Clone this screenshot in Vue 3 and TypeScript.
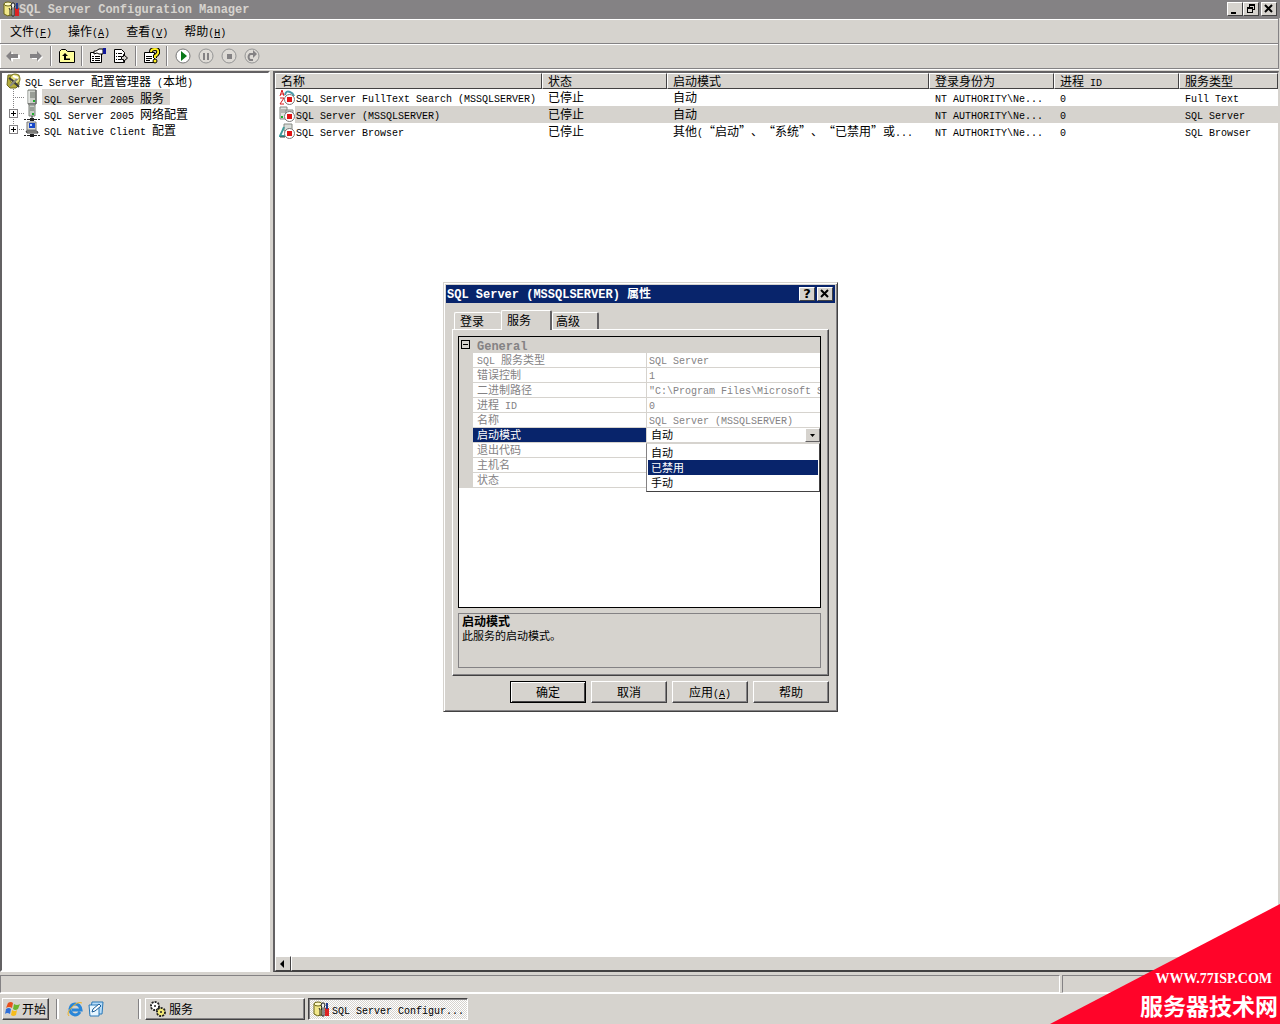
<script setup lang="ts">
import { ref, h, type FunctionalComponent } from 'vue'

// Latin runs are set in a half-width face beside full-width Chinese characters.
const T: FunctionalComponent<{ s: string }> = (props) =>
  h(
    'span',
    { class: 'mix' },
    props.s
      .split(/([\x20-\x7e]+)/)
      .filter(Boolean)
      .map((part) => (/^[\x20-\x7e]/.test(part) ? h('span', { class: 'latin' }, part) : part)),
  )
T.props = ['s']

interface Service {
  icon: string
  name: string
  state: string
  mode: string
  logon: string
  pid: string
  type: string
}

const menus = [
  { label: '文件', key: 'F' },
  { label: '操作', key: 'A' },
  { label: '查看', key: 'V' },
  { label: '帮助', key: 'H' },
]

const tools = [
  { id: 'back', label: '后退' },
  { id: 'forward', label: '前进' },
  { id: '' },
  { id: 'folder', label: '向上' },
  { id: '' },
  { id: 'props', label: '属性' },
  { id: 'export', label: '导出列表' },
  { id: '' },
  { id: 'help', label: '帮助' },
  { id: '' },
  { id: 'play', label: '启动' },
  { id: 'pause', label: '暂停' },
  { id: 'stop', label: '停止' },
  { id: 'restart', label: '重新启动' },
]

const nodes = [
  { icon: 'server', label: 'SQL Server 2005 服务', leaf: true },
  { icon: 'network', label: 'SQL Server 2005 网络配置', leaf: false },
  { icon: 'client', label: 'SQL Native Client 配置', leaf: false },
]
const activeNode = ref(0)

const columns = ['名称', '状态', '启动模式', '登录身份为', '进程 ID', '服务类型']
const services: Service[] = [
  { icon: 'svc-text', name: 'SQL Server FullText Search (MSSQLSERVER)', state: '已停止', mode: '自动', logon: 'NT AUTHORITY\\Ne...', pid: '0', type: 'Full Text' },
  { icon: 'svc-db', name: 'SQL Server (MSSQLSERVER)', state: '已停止', mode: '自动', logon: 'NT AUTHORITY\\Ne...', pid: '0', type: 'SQL Server' },
  { icon: 'svc-browser', name: 'SQL Server Browser', state: '已停止', mode: '其他(“启动”、“系统”、“已禁用”或...', logon: 'NT AUTHORITY\\Ne...', pid: '0', type: 'SQL Browser' },
]
const activeService = ref(1)

const tabs = ['登录', '服务', '高级']
const activeTab = ref(1)

const properties = [
  { name: 'SQL 服务类型', value: 'SQL Server' },
  { name: '错误控制', value: '1' },
  { name: '二进制路径', value: '"C:\\Program Files\\Microsoft S' },
  { name: '进程 ID', value: '0' },
  { name: '名称', value: 'SQL Server (MSSQLSERVER)' },
  { name: '启动模式', value: '自动', editing: true },
  { name: '退出代码', value: '' },
  { name: '主机名', value: '' },
  { name: '状态', value: '' },
]
const modes = ['自动', '已禁用', '手动']
const mode = ref('自动')
const hovered = ref(1)
</script>

<template>
  <div class="desktop">
    <svg class="defs" aria-hidden="true">
      <symbol id="sqlcfg" viewBox="0 0 16 16">
        <path d="M1 3v10q3 3 8 1V3z" fill="#f2e88a" stroke="#6b6412" />
        <ellipse cx="5" cy="3" rx="4" ry="2" fill="#fffbc8" stroke="#6b6412" />
        <path d="M6 7l1 2v5M9 7L8 9" stroke="#222" fill="none" />
        <path d="M9 2h2l1 2-1 3v8H9V7L8 4z" fill="#eee" stroke="#222" />
        <path d="M12 7h4v8h-4z" fill="#d22" />
        <path d="M14 2v6" stroke="#223a8c" stroke-width="2" />
      </symbol>
      <symbol id="root" viewBox="0 0 16 16">
        <path d="M2 2h11v10l-3 3H4l-3-3z" fill="#b5ad3a" stroke="#6e6a20" />
        <circle cx="9" cy="6" r="5" fill="#e6e07a" stroke="#77721f" />
        <path d="M3 5l3 2 7 7" stroke="#3c3c3c" stroke-width="2" fill="none" />
        <path d="M12 5l-8 8" stroke="#8a8a80" stroke-width="2" />
        <path d="M7 3l5 2" stroke="#fff" stroke-width="2" />
      </symbol>
      <symbol id="server" viewBox="0 0 16 16">
        <path d="M4 1h8v14H4z" fill="#c9cdc6" stroke="#7c817a" />
        <path d="M5 2v12" stroke="#fff" />
        <path d="M6 4h5M6 6h5M6 8h5" stroke="#6a7068" />
        <path d="M9 11h2v2H9z" fill="#1fae2c" />
        <path d="M12 1v14H4" stroke="#555" fill="none" />
      </symbol>
      <symbol id="network" viewBox="0 0 16 16">
        <path d="M5 0h6v11H5z" fill="#c9cdc6" stroke="#7c817a" />
        <path d="M6 3h4M6 5h4" stroke="#6a7068" />
        <path d="M8 8h2v2H8z" fill="#1fae2c" />
        <path d="M8 11v3M0 14.500h2M3 14.500h10M14 14.500h2" stroke="#222" />
        <path d="M6 13h4v3H6z" fill="#222" />
      </symbol>
      <symbol id="client" viewBox="0 0 16 16">
        <path d="M3 1h9v8H3z" fill="#dcdcd4" stroke="#777" />
        <path d="M5 2h6v5H5z" fill="#1747c8" />
        <path d="M6 3h2v2H6z" fill="#bcd4ff" />
        <path d="M2 10h11l1 2H3z" fill="#c8c8c0" stroke="#333" />
        <path d="M0 14.500h2M3 14.500h10M14 14.500h2" stroke="#222" />
        <path d="M6 13h4v3H6z" fill="#222" />
      </symbol>
      <symbol id="svc-stop" viewBox="0 0 16 16">
        <circle cx="10.500" cy="10.500" r="5" fill="#fff" stroke="#777" />
        <path d="M8 8h5v5H8z" fill="#e01414" />
      </symbol>
      <symbol id="svc-text" viewBox="0 0 16 16">
        <path d="M1 7l2-6 2 6M2 5h3M1 9h4l-4 6h4" stroke="#d81c1c" fill="none" />
        <path d="M6 6q1-5 5-3 3 1 4 4" stroke="#4a9aa8" stroke-width="2" fill="none" />
        <use href="#svc-stop" />
      </symbol>
      <symbol id="svc-db" viewBox="0 0 16 16">
        <path d="M1 1h7v12H1z" fill="#e2e4e0" stroke="#868a84" />
        <path d="M2 4h5M2 6h5" stroke="#868a84" />
        <path d="M2 10h2v2H2z" fill="#1fae2c" />
        <path d="M7 4h7v4H7z" fill="#d8dcd8" stroke="#868a84" />
        <use href="#svc-stop" />
      </symbol>
      <symbol id="svc-browser" viewBox="0 0 16 16">
        <path d="M5 1h8v7H5z" fill="#d8dcd8" stroke="#868a84" />
        <path d="M5 4q-2 5-4 9h5" stroke="#3d9c9c" stroke-width="2" fill="none" />
        <path d="M1 14h5" stroke="#444" />
        <use href="#svc-stop" />
      </symbol>
      <symbol id="back" viewBox="0 0 16 16">
        <path d="M3 9l5-5v3h7v4H8v3z" fill="#fff" />
        <path d="M1 8l5-5v3h7v4H6v3z" fill="#848284" />
      </symbol>
      <symbol id="forward" viewBox="0 0 16 16">
        <path d="M15 9l-5-5v3H4v4h6v3z" fill="#fff" />
        <path d="M14 8L9 3v3H2v4h7v3z" fill="#848284" />
      </symbol>
      <symbol id="folder" viewBox="0 0 16 16">
        <path d="M.5 14.500v-11l2-2h4l2 2h7v11z" fill="#ffff9c" stroke="#000" />
        <path d="M6 5L3 8h2v4h6v-1.500H7V8h2z" fill="#000" />
      </symbol>
      <symbol id="props" viewBox="0 0 16 16">
        <path d="M.5 4.500h11v10H.5z" fill="#fff" stroke="#000" />
        <path d="M2 8.500h2M5 8.500h5M2 10.500h2M5 10.500h5M2 12.500h2M5 12.500h5" stroke="#000" />
        <path d="M4 3h2l3-2h4v5H9L7 5 4 6z" fill="#fff" stroke="#000" />
        <path d="M13 0h3v6h-3z" fill="#10189c" />
      </symbol>
      <symbol id="export" viewBox="0 0 16 16">
        <path d="M1.500 1.500h7l3 3v10h-10z" fill="#fff" stroke="#000" />
        <path d="M3 5.500h1M5 5.500h4M3 8.500h1M5 8.500h3M3 11.500h1M5 11.500h3" stroke="#000" />
        <path d="M8.500 8.500h2v-2l4 3.500-4 3.500v-2h-2z" fill="#d6d3ce" stroke="#000" />
      </symbol>
      <symbol id="help" viewBox="0 0 16 16">
        <path d="M.5 4.500h10v10H.5z" fill="#fff" stroke="#000" />
        <path d="M2 8.500h6M2 10.500h6M2 12.500h4" stroke="#000" />
        <path d="M7 4q0-3 4-3t3 4q-1 2-3 3v2" stroke="#000" stroke-width="4" fill="none" />
        <path d="M7 4q0-3 4-3t3 4q-1 2-3 3v2" stroke="#ffee20" stroke-width="2" fill="none" />
        <circle cx="11" cy="13" r="2" fill="#ffee20" stroke="#000" />
      </symbol>
      <symbol id="play" viewBox="0 0 16 16">
        <circle cx="8" cy="8" r="7" fill="#fff" stroke="#777" />
        <path d="M6 3v10l6-5z" fill="#087818" />
      </symbol>
      <symbol id="pause" viewBox="0 0 16 16">
        <circle cx="8" cy="8" r="7" fill="#dedbd6" stroke="#949494" />
        <path d="M5 5h2v7H5zM9 5h2v7H9z" fill="#848284" />
      </symbol>
      <symbol id="stop" viewBox="0 0 16 16">
        <circle cx="8" cy="8" r="7" fill="#dedbd6" stroke="#949494" />
        <path d="M6 6h5v5H6z" fill="#848284" />
      </symbol>
      <symbol id="restart" viewBox="0 0 16 16">
        <circle cx="8" cy="8" r="7" fill="#dedbd6" stroke="#949494" />
        <path d="M9 12H6q-3-3 0-6h4" stroke="#848284" stroke-width="2" fill="none" />
        <path d="M9 2l4 4-4 4z" fill="#848284" />
      </symbol>
      <symbol id="flag" viewBox="0 0 16 16">
        <path d="M3 2q3-2 5 0L7 7Q4 5 1 7z" fill="#e8501c" />
        <path d="M9 3q3 2 6 0l-2 5q-3 2-5 0z" fill="#6cb52c" />
        <path d="M1 8q3-2 5 0l-1 5q-3-2-5 0z" fill="#2f6fd8" />
        <path d="M7 9q3 2 5 0l-1 5q-3 2-5 0z" fill="#f6bc1c" />
      </symbol>
      <symbol id="ie" viewBox="0 0 16 16">
        <path d="M13 11q-2 3-5 3-5-1-5-6 1-5 5-5 5 0 6 6H5" stroke="#2a86d8" stroke-width="3" fill="none" />
        <path d="M2 15Q-1 12 5 6q6-6 10-4" stroke="#f0b424" stroke-width="1" fill="none" />
      </symbol>
      <symbol id="desk" viewBox="0 0 16 16">
        <path d="M4 1h11l-1 12H2z" fill="#b8dcf8" stroke="#2878b8" />
        <path d="M1 4h10v11H2z" fill="#e8f6ff" stroke="#2878b8" />
        <path d="M4 11l1-3 6-5 2 2-6 5z" fill="#fff" stroke="#1c5c94" />
      </symbol>
      <symbol id="gears" viewBox="0 0 16 16">
        <circle cx="5" cy="5" r="4" fill="#fff" stroke="#222" stroke-width="2" stroke-dasharray="2 1" />
        <circle cx="5" cy="5" r="3" fill="#fff" />
        <circle cx="5" cy="5" r="1" fill="#222" />
        <circle cx="11" cy="11" r="4" fill="#f2e878" stroke="#222" stroke-width="2" stroke-dasharray="2 1" />
        <circle cx="11" cy="11" r="3" fill="#f2e878" />
        <circle cx="11" cy="11" r="1" fill="#222" />
      </symbol>
    </svg>

    <header class="titlebar">
      <svg class="icon"><use href="#sqlcfg" /></svg>
      <h1 class="bold"><T s="SQL Server Configuration Manager" /></h1>
      <div class="caption">
        <button class="cap" aria-label="最小化"><svg viewBox="0 0 10 10"><path d="M1 8h5v2H1z" /></svg></button>
        <button class="cap" aria-label="还原">
          <svg viewBox="0 0 10 10"><path d="M3 0h6v6H7V5h1V2H4v1H3zM1 3h6v6H1zM2 5v3h4V5z" fill-rule="evenodd" /></svg>
        </button>
        <button class="cap last" aria-label="关闭"><svg viewBox="0 0 10 10"><path d="M1 1l7 7M8 1L1 8" class="cross" /></svg></button>
      </div>
    </header>

    <nav class="menubar">
      <button v-for="m in menus" :key="m.key"><T :s="m.label + '('" /><u class="latin">{{ m.key }}</u><span class="latin">)</span></button>
    </nav>

    <div class="toolbar">
      <template v-for="(t, i) in tools" :key="i">
        <button v-if="t.id" :aria-label="t.label"><svg class="icon"><use :href="'#' + t.id" /></svg></button>
        <span v-else class="sep"></span>
      </template>
    </div>

    <main class="panes">
      <aside class="tree">
        <div class="root-node"><svg class="icon"><use href="#root" /></svg><T s="SQL Server 配置管理器 (本地)" /></div>
        <ul>
          <li v-for="(n, i) in nodes" :key="n.label">
            <span class="branch"><button v-if="!n.leaf" class="expander" aria-label="展开"></button></span>
            <svg class="icon"><use :href="'#' + n.icon" /></svg>
            <button class="node" :class="{ active: i === activeNode }" @click="activeNode = i"><T :s="n.label" /></button>
          </li>
        </ul>
      </aside>

      <section class="list">
        <table>
          <colgroup>
            <col class="c-name" /><col class="c-mid" /><col class="c-mode" /><col class="c-mid" /><col class="c-mid" /><col />
          </colgroup>
          <thead>
            <tr><th v-for="c in columns" :key="c" scope="col"><T :s="c" /></th></tr>
          </thead>
          <tbody>
            <tr v-for="(s, i) in services" :key="s.name" :class="{ active: i === activeService }" @click="activeService = i">
              <td class="name"><div><svg class="icon"><use :href="'#' + s.icon" /></svg><span class="fill"><T :s="s.name" /></span></div></td>
              <td><T :s="s.state" /></td>
              <td><T :s="s.mode" /></td>
              <td><T :s="s.logon" /></td>
              <td><T :s="s.pid" /></td>
              <td><T :s="s.type" /></td>
            </tr>
          </tbody>
        </table>
        <div class="scroll">
          <button aria-label="向左滚动"><svg viewBox="0 0 8 8"><path d="M5 0v8L1 4z" /></svg></button>
          <div class="thumb"></div>
        </div>
      </section>
    </main>

    <div class="status"><span></span><span class="side"></span></div>

    <footer class="taskbar">
      <button class="start"><svg class="icon"><use href="#flag" /></svg>开始</button>
      <span class="grip"></span>
      <div class="quick">
        <button aria-label="Internet Explorer"><svg class="icon"><use href="#ie" /></svg></button>
        <button aria-label="显示桌面"><svg class="icon"><use href="#desk" /></svg></button>
      </div>
      <span class="grip"></span>
      <button class="task"><svg class="icon"><use href="#gears" /></svg>服务</button>
      <button class="task pressed"><svg class="icon"><use href="#sqlcfg" /></svg><T s="SQL Server Configur..." /></button>
    </footer>

    <section class="dialog" role="dialog" aria-labelledby="dialog-title">
      <header>
        <h2 id="dialog-title" class="bold"><T s="SQL Server (MSSQLSERVER) 属性" /></h2>
        <div class="caption">
          <button class="cap" aria-label="帮助主题"><b>?</b></button>
          <button class="cap last" aria-label="关闭对话框"><svg viewBox="0 0 10 10"><path d="M1 1l7 7M8 1L1 8" class="cross" /></svg></button>
        </div>
      </header>
      <div class="tabs" role="tablist">
        <button v-for="(t, i) in tabs" :key="t" role="tab" :aria-selected="i === activeTab" @click="activeTab = i">{{ t }}</button>
      </div>
      <div class="page">
        <div class="grid">
          <div class="group bold"><button class="collapse" aria-label="折叠"></button><T s="General" /></div>
          <div v-for="p in properties" :key="p.name" class="prop" :class="{ editing: p.editing }">
            <component :is="p.editing ? 'label' : 'span'" class="key" :for="p.editing ? 'mode' : undefined"><T :s="p.name" /></component>
            <span v-if="!p.editing" class="value"><T :s="p.value" /></span>
            <span v-else class="value combo">
              <select id="mode" v-model="mode"><option v-for="m in modes" :key="m">{{ m }}</option></select>
              <span class="arrow"><svg viewBox="0 0 5 3"><path d="M0 0h5L2.500 3z" /></svg></span>
              <ul class="popup" role="listbox" aria-label="启动模式">
                <li v-for="(m, i) in modes" :key="m" role="option" :aria-selected="i === hovered" @mouseenter="hovered = i" @click="mode = m">{{ m }}</li>
              </ul>
            </span>
          </div>
        </div>
        <div class="hint"><strong>启动模式</strong><p>此服务的启动模式。</p></div>
      </div>
      <div class="actions">
        <button class="default">确定</button>
        <button>取消</button>
        <button><T s="应用(" /><u class="latin">A</u><span class="latin">)</span></button>
        <button>帮助</button>
      </div>
    </section>

    <a class="badge" href="#">
      <span class="site">WWW.77ISP.COM</span>
      <span class="brand">服务器技术网</span>
    </a>
  </div>
</template>

<style>
body {
  margin: 0;
  background: #d6d3ce;
}
.latin {
  font-family: 'Liberation Mono', monospace;
  font-size: 10px;
  line-height: 0;
  white-space: pre;
}
.bold .latin {
  font-size: 12px;
}
.mix {
  white-space: nowrap;
}
</style>

<style scoped>
.desktop {
  position: relative;
  display: flex;
  flex-direction: column;
  min-height: 100vh;
  overflow: hidden;
  background: #d6d3ce;
  color: #000;
  font: 12px/16px 'Noto Sans CJK SC', sans-serif;
  text-spacing-trim: space-all;
}
.desktop * {
  box-sizing: border-box;
}
.defs {
  position: absolute;
  width: 0;
  height: 0;
}
button {
  padding: 0;
  border: 0;
  background: none;
  color: inherit;
  font: inherit;
}
h1,
h2,
p,
ul {
  margin: 0;
  padding: 0;
  list-style: none;
}
h1,
h2 {
  padding-bottom: 2px;
  font-size: 12px;
  line-height: 14px;
}
.icon {
  width: 16px;
  height: 16px;
  flex: none;
  display: block;
}
.titlebar {
  display: flex;
  align-items: center;
  height: 18px;
  padding: 0 3px;
  background: #848284;
  color: #d6d3ce;
}
.caption {
  display: flex;
  margin-left: auto;
}
.cap {
  display: flex;
  align-items: center;
  justify-content: center;
  width: 16px;
  height: 14px;
  border: 1px solid;
  border-color: #fff #424142 #424142 #fff;
  background: #d6d3ce;
  color: #000;
}
.cap svg {
  width: 10px;
  height: 10px;
}
.cap b {
  font: bold 13px/12px 'DejaVu Sans', sans-serif;
}
.cap.last {
  margin-left: 2px;
}
.cross {
  stroke: #000;
  stroke-width: 2;
}
.menubar {
  display: flex;
  align-items: center;
  height: 26px;
  margin-right: 1px;
  padding-left: 2px;
  border: 1px solid #848284;
  border-width: 0 1px 1px 0;
  box-shadow: inset 0 1px #848284, inset 0 2px #fff, inset 1px 0 #fff;
}
.menubar button {
  padding: 0 8px;
}
.toolbar {
  display: flex;
  align-items: center;
  height: 25px;
  margin: 0 1px 2px 0;
  padding-left: 1px;
  border-right: 1px solid #848284;
  border-bottom: 1px solid #848284;
  box-shadow: inset 0 1px #fff, inset 1px 0 #fff, 0 1px #fff;
}
.toolbar button {
  width: 23px;
  padding: 0 4px;
}
.toolbar .sep {
  width: 2px;
  height: 20px;
  margin: 0 3px;
  border-left: 1px solid #848284;
  border-right: 1px solid #fff;
}
.panes {
  display: flex;
  flex: 1;
  gap: 3px;
  margin-bottom: 3px;
}
.tree {
  width: 270px;
  flex: none;
  padding: 0 4px;
  border: 2px solid;
  border-color: #636163 #fff #fff #636163;
  background: #fff;
}
.root-node {
  display: flex;
  align-items: center;
  gap: 3px;
  height: 16px;
  padding-right: 4px;
  line-height: 14px;
}
.tree li {
  display: flex;
  align-items: center;
  height: 16px;
}
.branch {
  position: relative;
  align-self: stretch;
  width: 18px;
  background:
    repeating-linear-gradient(#848284 0 1px, #fff 1px 2px) 7px 0 / 1px 100% no-repeat,
    repeating-linear-gradient(90deg, #848284 0 1px, #fff 1px 2px) 7px 8px / 11px 1px no-repeat;
}
li:last-child > .branch {
  background-size: 1px 8px, 11px 1px;
}
.expander,
.collapse {
  width: 9px;
  height: 9px;
  border: 1px solid #848284;
  background: linear-gradient(#000, #000) center / 5px 1px no-repeat, linear-gradient(#000, #000) center / 1px 5px no-repeat, #fff;
}
.expander {
  position: absolute;
  left: 3px;
  top: 4px;
}
.node {
  height: 16px;
  margin-left: 2px;
  padding: 0 6px 0 2px;
  line-height: 15px;
}
.node.active {
  background: #d6d3ce;
}
.list {
  display: flex;
  flex: 1;
  flex-direction: column;
  min-width: 0;
  margin-right: 1px;
  border: 2px solid;
  border-color: #636163 #d6d3ce #424142 #636163;
  border-right-width: 1px;
  border-bottom-width: 1px;
  background: #fff;
}
table {
  width: 100%;
  table-layout: fixed;
  border-collapse: separate;
  border-spacing: 0;
}
.c-name {
  width: 267px;
}
.c-mid {
  width: 125px;
}
.c-mode {
  width: 262px;
}
th,
td {
  height: 17px;
  padding: 0 0 0 6px;
  text-align: left;
  font-weight: normal;
  line-height: 16px;
  vertical-align: top;
  white-space: nowrap;
}
th {
  height: 16px;
  padding-left: 5px;
  border: 1px solid;
  border-color: #fff #424142 #424142 #fff;
  background: #d6d3ce;
  line-height: 14px;
}
td.name {
  padding-left: 4px;
}
td.name > div {
  display: flex;
}
.fill {
  flex: 1;
  height: 17px;
  padding-left: 1px;
}
tr.active td:not(.name),
tr.active .fill {
  background: #d6d3ce;
}
.scroll {
  display: flex;
  height: 15px;
  margin-top: auto;
}
.scroll button,
.thumb {
  border: 1px solid;
  border-color: #fff #424142 #424142 #fff;
  background: #d6d3ce;
}
.scroll button {
  display: flex;
  align-items: center;
  justify-content: center;
  width: 16px;
}
.scroll svg {
  width: 8px;
  height: 8px;
}
.thumb {
  flex: 1;
}
.status {
  display: flex;
  gap: 2px;
  height: 18px;
}
.status span {
  flex: 1;
  border: 1px solid;
  border-color: #848284 #fff #fff #848284;
}
.status .side {
  flex: none;
  width: 218px;
}
.taskbar {
  display: flex;
  align-items: center;
  height: 31px;
  padding: 0 2px;
  border-top: 1px solid #fff;
}
.start,
.task {
  display: flex;
  align-items: center;
  height: 22px;
  border: 1px solid;
  border-color: #fff #424142 #424142 #fff;
  box-shadow: inset -1px -1px #848284;
}
.start {
  width: 47px;
  padding-left: 2px;
  gap: 1px;
}
.grip {
  width: 3px;
  height: 20px;
  margin: 0 4px 0 7px;
  border-left: 1px solid #848284;
  border-right: 2px solid #fff;
}
.quick {
  display: flex;
  gap: 5px;
  width: 68px;
  padding-left: 4px;
}
.task {
  width: 160px;
  margin-right: 3px;
  padding-left: 4px;
  gap: 3px;
}
.pressed {
  border-color: #424142 #fff #fff #424142;
  box-shadow: inset 1px 1px #848284;
  background: repeating-conic-gradient(#fff 0 25%, #d6d3ce 0 50%) 0 0 / 2px 2px;
}
.dialog {
  position: absolute;
  left: calc(50% - 197px);
  top: 282px;
  width: 395px;
  padding: 2px;
  border: 1px solid;
  border-color: #d6d3ce #424142 #424142 #d6d3ce;
  box-shadow: inset 1px 1px #fff, inset -1px -1px #848284;
  background: #d6d3ce;
}
.dialog > header {
  display: flex;
  align-items: center;
  height: 18px;
  padding: 0 2px 0 1px;
  background: #08246b;
  color: #fff;
}
.tabs {
  display: flex;
  align-items: flex-end;
  height: 26px;
  padding: 0 8px;
}
.tabs button {
  width: 47px;
  height: 17px;
  padding: 0 0 0 5px;
  border: 1px solid #fff;
  border-width: 1px 0 0 1px;
  border-radius: 2px 2px 0 0;
  text-align: left;
  line-height: 16px;
}
.tabs button:last-child,
.tabs button[aria-selected='true'] {
  border-right: 2px solid #636163;
}
.tabs button:last-child {
  padding-left: 3px;
}
.tabs button[aria-selected='true'] {
  z-index: 1;
  width: 51px;
  height: 20px;
  margin-bottom: -1px;
  padding-bottom: 2px;
  background: #d6d3ce;
}
.page {
  margin: 0 6px;
  padding: 6px 7px 7px 5px;
  border: 1px solid;
  border-color: #fff #424142 #424142 #fff;
  box-shadow: inset -1px -1px #848284;
}
.grid {
  height: 272px;
  border: 1px solid #000;
  background: #fff;
  color: #848284;
  font-size: 11px;
  line-height: 12px;
}
.group {
  display: flex;
  align-items: center;
  gap: 7px;
  height: 16px;
  padding: 0 0 1px 2px;
  background: #d6d3ce;
  font-weight: bold;
}
.collapse {
  border-color: #000;
  background: linear-gradient(#000, #000) center / 5px 1px no-repeat;
}
.prop {
  display: flex;
  height: 15px;
  border-left: 14px solid #d6d3ce;
}
.key,
.value {
  border-bottom: 1px solid #d6d3ce;
}
.key {
  width: 174px;
  padding-left: 4px;
  border-right: 1px solid #d6d3ce;
}
.value {
  flex: 1;
  min-width: 0;
  padding-left: 2px;
  overflow: hidden;
}
.editing {
  color: #000;
}
.editing .key {
  background: #08246b;
  color: #fff;
}
.combo {
  position: relative;
  display: flex;
  padding-left: 4px;
  overflow: visible;
}
select {
  flex: 1;
  min-width: 0;
  height: 14px;
  padding: 0 0 2px;
  border: 0;
  background: #fff;
  color: #000;
  font: inherit;
  line-height: 12px;
  appearance: none;
}
.arrow {
  display: flex;
  align-items: center;
  justify-content: center;
  width: 15px;
  height: 14px;
  border: 1px solid;
  border-color: #fff #636163 #636163 #fff;
  background: #d6d3ce;
}
.arrow svg {
  width: 5px;
  height: 3px;
}
.popup {
  position: absolute;
  z-index: 1;
  left: -1px;
  right: 0;
  top: 15px;
  padding: 1px;
  border: 1px solid;
  border-color: #d6d3ce #424142 #424142 #848284;
  background: #fff;
}
.popup li {
  height: 15px;
  padding-left: 3px;
  line-height: 14px;
}
.popup li[aria-selected='true'] {
  background: #08246b;
  color: #fff;
}
.hint {
  height: 55px;
  margin-top: 5px;
  padding-left: 3px;
  border: 1px solid #848284;
  font-size: 11px;
  line-height: 15px;
}
.hint strong {
  display: block;
  font-size: 12px;
  line-height: 14px;
}
.actions {
  display: flex;
  justify-content: flex-end;
  gap: 5px;
  padding: 5px 6px 6px;
}
.actions button {
  width: 76px;
  height: 22px;
  border: 1px solid;
  border-color: #fff #424142 #424142 #fff;
  box-shadow: inset -1px -1px #848284;
}
.actions .default {
  border-color: #000;
  box-shadow: inset 1px 1px #fff, inset -1px -1px #424142;
}
.badge {
  position: absolute;
  right: 0;
  bottom: 0;
  z-index: 2;
  display: flex;
  flex-direction: column;
  align-items: flex-end;
  justify-content: flex-end;
  width: 230px;
  height: 120px;
  padding: 0 2px 2px 0;
  background: #ff0429;
  clip-path: polygon(100% 0, 100% 100%, 0 100%);
  color: #fff;
  text-decoration: none;
}
.site {
  padding-right: 6px;
  font: bold 14px/18px 'Liberation Serif', serif;
}
.brand {
  font-size: 23px;
  font-weight: bold;
  line-height: 34px;
}
</style>
